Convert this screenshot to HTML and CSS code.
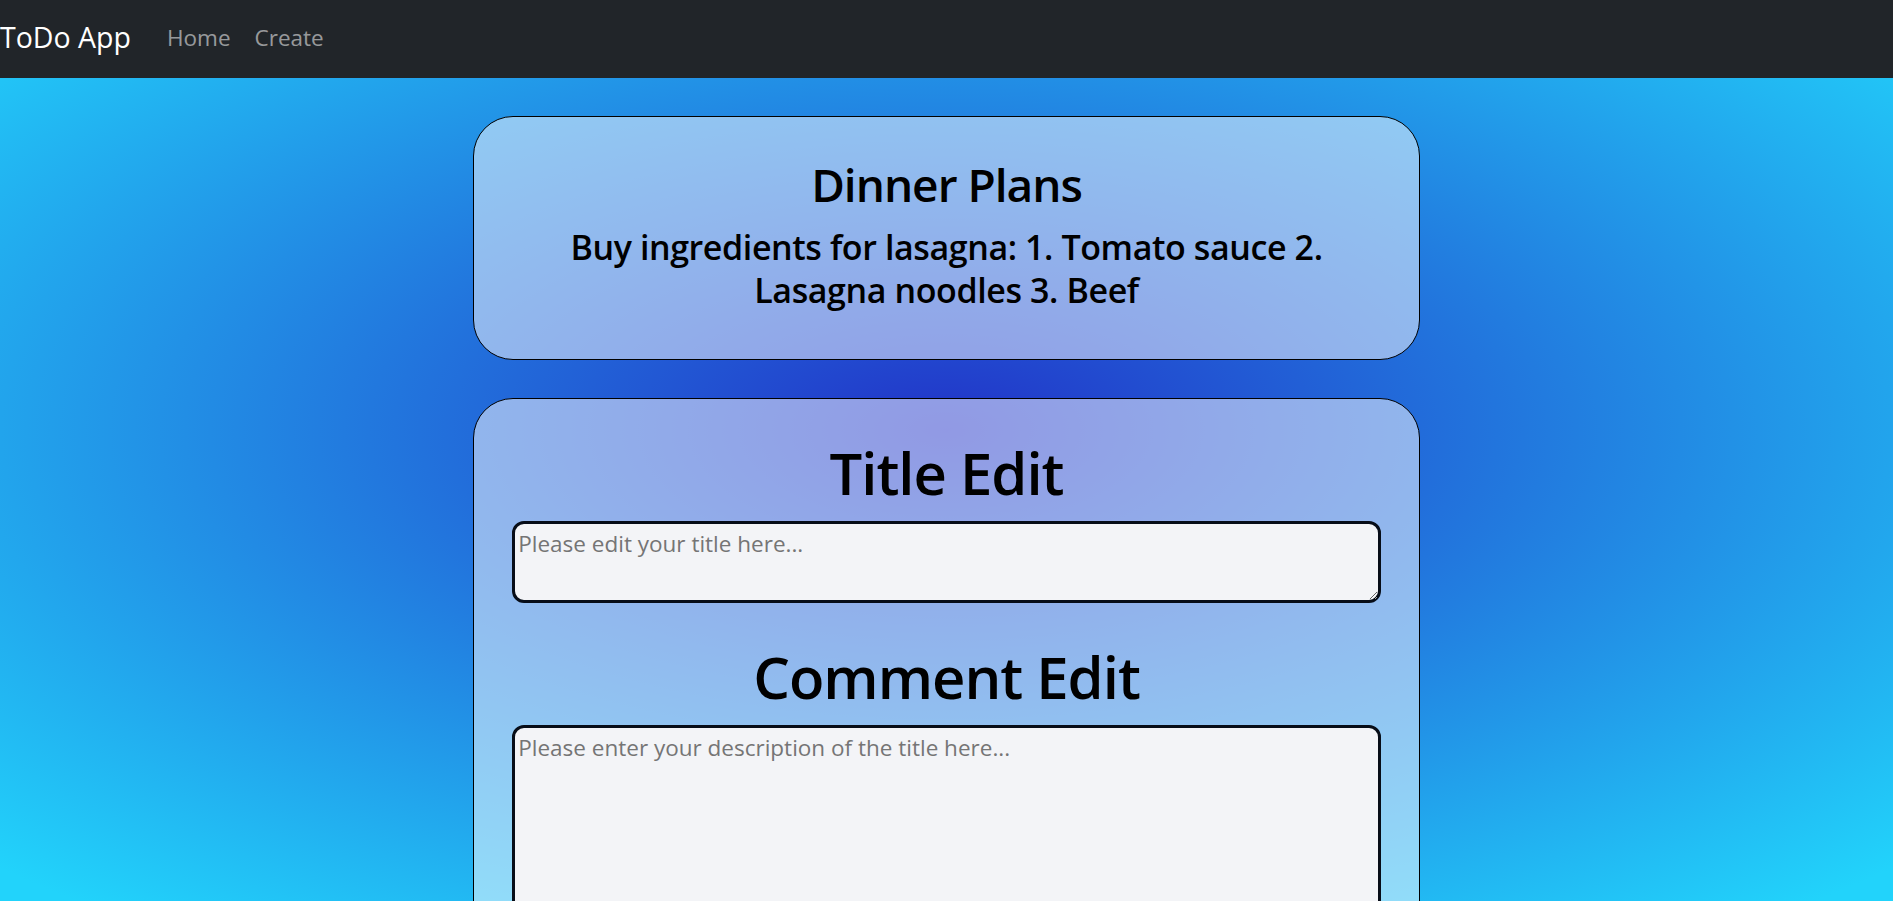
FILE: index.html
```html
<!DOCTYPE html>
<html lang="en">
<head>
<meta charset="utf-8">
<title>ToDo App</title>
<link rel="stylesheet" href="styles.css">
</head>
<body>
<nav class="navbar">
  <a class="navbar-brand" href="#">ToDo App</a>
  <ul class="navbar-nav">
    <li><a class="nav-link" href="#">Home</a></li>
    <li><a class="nav-link" href="#">Create</a></li>
  </ul>
</nav>
<main class="content">
  <section class="card card-todo">
    <h2 class="todo-title">Dinner Plans</h2>
    <h4 class="todo-desc">Buy ingredients for lasagna: 1. Tomato sauce 2. Lasagna noodles 3. Beef</h4>
  </section>
  <section class="card card-edit">
    <form class="edit-form">
      <h1 class="edit-label">Title Edit</h1>
      <textarea class="edit-input title-input" placeholder="Please edit your title here..."></textarea>
      <h1 class="edit-label">Comment Edit</h1>
      <textarea class="edit-input comment-input" placeholder="Please enter your description of the title here..."></textarea>
    </form>
  </section>
</main>
</body>
</html>
```
FILE: styles.css
```css
* {
  box-sizing: border-box;
}

html {
  background: #22d3fb;
}

body {
  margin: 0;
  min-height: 100vh;
  font-family: "Open Sans", "Noto Sans", sans-serif;
  font-size: 22.5px;
  line-height: 1.5;
  color: #000;
  background: radial-gradient(ellipse 1338px 620px at 946px 430px, #2233c8 0%, #22d3fb 100%);
}

.navbar {
  display: flex;
  align-items: center;
  height: 78px;
  background: #212529;
}

.navbar-brand {
  font-size: 28.5px;
  line-height: 45px;
  color: #fff;
  text-decoration: none;
  margin-right: 24px;
  padding-bottom: 3px;
}

.navbar-nav {
  display: flex;
  list-style: none;
  margin: 0;
  padding: 0 0 2px;
}

.nav-link {
  display: block;
  padding: 0 12px;
  font-size: 22.5px;
  line-height: 36px;
  color: rgba(255, 255, 255, 0.55);
  text-decoration: none;
}

.content {
  width: 50%;
  margin: 38px auto 36px;
  display: flex;
  flex-direction: column;
  gap: 38px;
}

.card {
  background: rgba(255, 255, 255, 0.5);
  border: 1px solid #000;
  border-radius: 40px;
  padding: 38px 36px 36px;
  text-align: center;
}

.card-todo {
  padding-top: 39px;
  padding-bottom: 35px;
}

.todo-title {
  margin: 0 0 12px;
  font-size: 46px;
  font-weight: 600;
  letter-spacing: -1px;
  line-height: 57.6px;
}

.todo-desc {
  margin: 0 0 12px;
  font-size: 34px;
  font-weight: 600;
  letter-spacing: -0.4px;
  line-height: 43.2px;
}

.edit-form {
  display: flex;
  flex-direction: column;
  align-items: center;
}

.edit-label {
  margin: 0 0 12px;
  font-size: 58px;
  font-weight: 600;
  letter-spacing: -1px;
  line-height: 72px;
}

.edit-input {
  display: block;
  width: calc(100% - 4px);
  border: 3px solid #070d18;
  border-radius: 12px;
  background: #f3f4f7;
  padding: 3px;
  font-family: inherit;
  font-size: 22.5px;
  line-height: 1.5;
  color: #000;
  resize: vertical;
}

.edit-input::placeholder {
  color: #757575;
}

.title-input {
  height: 82px;
  margin-bottom: 38px;
}

.comment-input {
  height: 320px;
}
```
